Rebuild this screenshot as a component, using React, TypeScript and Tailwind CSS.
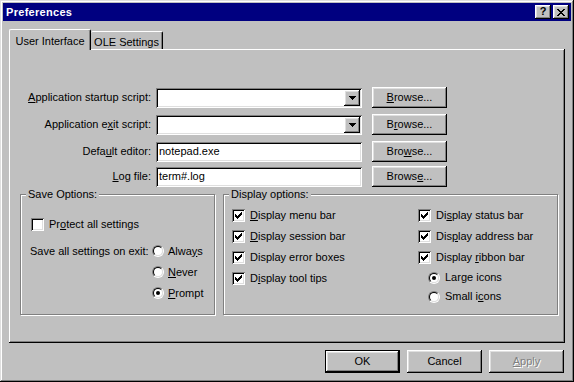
import type { ReactNode } from 'react';

// classic 3D edges
const windowEdge =
  'shadow-[inset_-1px_-1px_#000,inset_1px_1px_#dfdfdf,inset_-2px_-2px_#808080,inset_2px_2px_#fff]';
const raised =
  'shadow-[inset_-1px_-1px_#000,inset_1px_1px_#fff,inset_-2px_-2px_#808080,inset_2px_2px_#dfdfdf]';
const sunken =
  'shadow-[inset_1px_1px_#808080,inset_-1px_-1px_#fff,inset_2px_2px_#000,inset_-2px_-2px_#dfdfdf]';

function Key({ children }: { children: ReactNode }) {
  return <span className="underline underline-offset-[1px] decoration-1">{children}</span>;
}

function Button({ children, className = '' }: { children: ReactNode; className?: string }) {
  return (
    <button
      type="button"
      className={`flex w-[75px] items-center justify-center bg-[#c0c0c0] text-[11px] ${raised} ${className}`}
    >
      {children}
    </button>
  );
}

function Checkbox({ label }: { label: ReactNode }) {
  return (
    <div className="flex items-center">
      <span className={`flex h-[13px] w-[13px] items-center justify-center bg-white ${sunken}`}>
        <svg width="7" height="7" viewBox="0 0 7 7" shapeRendering="crispEdges">
          <path
            fill="#000"
            d="M6 0h1v1h-1z M5 1h2v1h-2z M0 2h1v1h-1z M4 2h3v1h-3z M0 3h2v1h-2z M3 3h3v1h-3z M0 4h5v1h-5z M1 5h3v1h-3z M2 6h1v1h-1z"
          />
        </svg>
      </span>
      <span className="ml-[5px]">{label}</span>
    </div>
  );
}

function EmptyCheckbox({ label }: { label: ReactNode }) {
  return (
    <div className="flex items-center">
      <span className={`h-[13px] w-[13px] bg-white ${sunken}`} />
      <span className="ml-[5px]">{label}</span>
    </div>
  );
}

function Radio({ label, checked = false, gap = 'ml-[4px]' }: { label: ReactNode; checked?: boolean; gap?: string }) {
  return (
    <div className="flex items-center">
      <span className="flex h-[12px] w-[12px] rounded-full border border-b-white border-l-[#808080] border-r-white border-t-[#808080]">
        <span className="flex flex-1 items-center justify-center rounded-full border border-b-[#dfdfdf] border-l-black border-r-[#dfdfdf] border-t-black bg-white">
          {checked && <span className="h-[4px] w-[4px] rounded-full bg-black" />}
        </span>
      </span>
      <span className={gap}>{label}</span>
    </div>
  );
}

function GroupBox({ title, className, children }: { title: string; className: string; children: ReactNode }) {
  return (
    <div
      className={`relative border border-[#808080] shadow-[inset_1px_1px_#fff,1px_1px_#fff] ${className}`}
    >
      <span className="absolute -top-[8px] left-[5px] bg-[#c0c0c0] px-[2px] leading-[14px]">{title}</span>
      {children}
    </div>
  );
}

function FieldRow({
  label,
  value,
  combo,
  browse,
  className,
}: {
  label: ReactNode;
  value?: string;
  combo?: boolean;
  browse: ReactNode;
  className: string;
}) {
  return (
    <div className={`flex h-[21px] items-center ${className}`}>
      <div className="w-[142px] text-right">{label}</div>
      <div className={`ml-[5px] flex h-[20px] w-[206px] items-center bg-white pl-[3px] ${sunken}`}>
        <span className="flex-1">{value}</span>
        {combo && (
          <span className={`mr-[2px] flex h-[16px] w-[16px] items-center justify-center bg-[#c0c0c0] ${raised}`}>
            <svg width="7" height="4" viewBox="0 0 7 4" shapeRendering="crispEdges">
              <path fill="#000" d="M0 0h7v1h-7z M1 1h5v1h-5z M2 2h3v1h-3z M3 3h1v1h-1z" />
            </svg>
          </span>
        )}
      </div>
      <Button className="ml-[10px] h-[21px]">{browse}</Button>
    </div>
  );
}

export default function App() {
  return (
    <div
      className={`flex h-[382px] w-[574px] flex-col bg-[#c0c0c0] p-[3px] font-['Liberation_Sans',Arial,sans-serif] text-[11px] text-black ${windowEdge}`}
    >
      {/* title bar */}
      <div className="flex h-[18px] items-center bg-[#000080] pl-[3px] pr-[2px]">
        <span className="flex-1 text-[11px] font-bold text-white tracking-[0.3px]">Preferences</span>
        <span className={`flex h-[14px] w-[16px] items-center justify-center bg-[#c0c0c0] pb-[1px] text-[11px] font-bold ${raised}`}>
          ?
        </span>
        <span className={`ml-[2px] flex h-[14px] w-[16px] items-center justify-center bg-[#c0c0c0] ${raised}`}>
          <svg width="8" height="7" viewBox="0 0 8 7" shapeRendering="crispEdges">
            <path
              fill="#000"
              d="M0 0h2v1h-2z M6 0h2v1h-2z M1 1h2v1h-2z M5 1h2v1h-2z M2 2h4v1h-4z M3 3h2v1h-2z M2 4h4v1h-4z M1 5h2v1h-2z M5 5h2v1h-2z M0 6h2v1h-2z M6 6h2v1h-2z"
            />
          </svg>
        </span>
      </div>

      <div className="flex flex-1 flex-col px-[6px]">
        {/* tabs */}
        <div className="mt-[8px] flex h-[20px] items-end">
          <div className="relative z-10 -mb-[1px] flex h-[21px] w-[82px] items-start justify-center rounded-t-[2px] border-l border-t border-r border-l-white border-t-white border-r-black bg-[#c0c0c0] pt-[3px] shadow-[inset_-1px_0_#808080]">
            User Interface
          </div>
          <div className="flex h-[18px] w-[72px] items-start justify-center rounded-t-[2px] border-t border-r border-t-white border-r-black bg-[#c0c0c0] pt-[2px] shadow-[inset_-1px_0_#808080]">
            OLE Settings
          </div>
        </div>

        {/* tab page */}
        <div
          className={`flex h-[294px] flex-col bg-[#c0c0c0] pt-[38px] shadow-[inset_-1px_-1px_#000,inset_1px_1px_#fff,inset_-2px_-2px_#808080]`}
        >
          <FieldRow
            className=""
            combo
            label={
              <>
                <Key>A</Key>pplication startup script:
              </>
            }
            browse={
              <>
                <Key>B</Key>rowse...
              </>
            }
          />
          <FieldRow
            className="mt-[6px]"
            combo
            label={
              <>
                Application e<Key>x</Key>it script:
              </>
            }
            browse={
              <>
                B<Key>r</Key>owse...
              </>
            }
          />
          <FieldRow
            className="mt-[6px]"
            value="notepad.exe"
            label={
              <>
                Defa<Key>u</Key>lt editor:
              </>
            }
            browse={
              <>
                Bro<Key>w</Key>se...
              </>
            }
          />
          <FieldRow
            className="mt-[4px]"
            value="term#.log"
            label={
              <>
                <Key>L</Key>og file:
              </>
            }
            browse={
              <>
                Brows<Key>e</Key>...
              </>
            }
          />

          <div className="ml-[11px] mt-[7px] flex h-[121px] gap-[8px]">
            <GroupBox title="Save Options:" className="w-[195px]">
              <div className="pl-[10px] pt-[21px]">
                <EmptyCheckbox
                  label={
                    <>
                      Pr<Key>o</Key>tect all settings
                    </>
                  }
                />
              </div>
              <div className="mt-[8px] flex pl-[9px]">
                <div className="flex h-[21px] w-[122px] items-center">Save all settings on exit:</div>
                <div className="flex flex-col">
                  <div className="flex h-[21px] items-center">
                    <Radio
                      label={
                        <>
                          Alwa<Key>y</Key>s
                        </>
                      }
                    />
                  </div>
                  <div className="flex h-[21px] items-center">
                    <Radio
                      label={
                        <>
                          <Key>N</Key>ever
                        </>
                      }
                    />
                  </div>
                  <div className="flex h-[21px] items-center">
                    <Radio
                      checked
                      label={
                        <>
                          <Key>P</Key>rompt
                        </>
                      }
                    />
                  </div>
                </div>
              </div>
            </GroupBox>

            <GroupBox title="Display options:" className="w-[335px]">
              <div className="flex pl-[8px] pt-[10px]">
                <div className="flex w-[186px] flex-col">
                  <div className="flex h-[21px] items-center">
                    <Checkbox
                      label={
                        <>
                          <Key>D</Key>isplay menu bar
                        </>
                      }
                    />
                  </div>
                  <div className="flex h-[21px] items-center">
                    <Checkbox
                      label={
                        <>
                          <Key>D</Key>isplay session bar
                        </>
                      }
                    />
                  </div>
                  <div className="flex h-[21px] items-center">
                    <Checkbox label="Display error boxes" />
                  </div>
                  <div className="flex h-[21px] items-center">
                    <Checkbox
                      label={
                        <>
                          D<Key>i</Key>splay tool tips
                        </>
                      }
                    />
                  </div>
                </div>
                <div className="flex flex-col">
                  <div className="flex h-[21px] items-center">
                    <Checkbox
                      label={
                        <>
                          Di<Key>s</Key>play status bar
                        </>
                      }
                    />
                  </div>
                  <div className="flex h-[21px] items-center">
                    <Checkbox
                      label={
                        <>
                          Dis<Key>p</Key>lay address bar
                        </>
                      }
                    />
                  </div>
                  <div className="flex h-[21px] items-center">
                    <Checkbox
                      label={
                        <>
                          Display <Key>r</Key>ibbon bar
                        </>
                      }
                    />
                  </div>
                  <div className="flex h-[19px] items-center pl-[10px]">
                    <Radio checked gap="ml-[5px]" label="Large icons" />
                  </div>
                  <div className="flex h-[19px] items-center pl-[10px]">
                    <Radio
                      gap="ml-[5px]"
                      label={
                        <>
                          Small i<Key>c</Key>ons
                        </>
                      }
                    />
                  </div>
                </div>
              </div>
            </GroupBox>
          </div>
        </div>

        {/* dialog buttons */}
        <div className="mr-[1px] mt-[7px] flex justify-end gap-[7px]">
          <Button className="h-[23px] border border-black">OK</Button>
          <Button className="h-[23px]">Cancel</Button>
          <Button className="h-[23px] text-[#808080] [text-shadow:1px_1px_#fff]">
            <Key>A</Key>pply
          </Button>
        </div>
      </div>
    </div>
  );
}
